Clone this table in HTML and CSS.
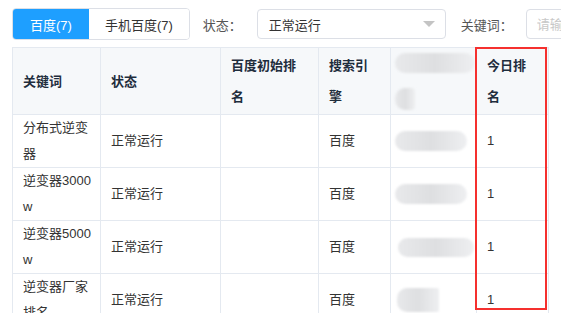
FILE: index.html
```html
<!DOCTYPE html>
<html lang="zh-CN">

<head>
    <meta charset="UTF-8">
    <meta name="viewport" content="width=device-width, initial-scale=1.0">
    <title>关键词排名</title>
    <link rel="stylesheet" href="styles.css">
</head>

<body>
    <div class="toolbar">
        <div class="tabs">
            <button class="tab active">百度(7)</button>
            <button class="tab">手机百度(7)</button>
        </div>
        <span class="label">状态：</span>
        <div class="select">
            <span>正常运行</span>
            <i class="arrow"></i>
        </div>
        <span class="label">关键词：</span>
        <input class="keyword" type="text" placeholder="请输入关键词">
    </div>

    <div class="table-wrap">
        <table class="rank-table">
            <colgroup>
                <col style="width: 88px">
                <col style="width: 120px">
                <col style="width: 98px">
                <col style="width: 72px">
                <col style="width: 86px">
                <col style="width: 72px">
            </colgroup>
            <thead>
                <tr>
                    <th>关键词</th>
                    <th>状态</th>
                    <th>百度初始排名</th>
                    <th>搜索引擎</th>
                    <th class="site">
                        <div class="blur line"></div>
                        <div class="blur dot"></div>
                    </th>
                    <th>今日排名</th>
                </tr>
            </thead>
            <tbody>
                <tr>
                    <td>分布式逆变器</td>
                    <td>正常运行</td>
                    <td></td>
                    <td>百度</td>
                    <td class="site"><div class="blur row-a"></div></td>
                    <td>1</td>
                </tr>
                <tr>
                    <td>逆变器3000w</td>
                    <td>正常运行</td>
                    <td></td>
                    <td>百度</td>
                    <td class="site"><div class="blur row-a"></div></td>
                    <td>1</td>
                </tr>
                <tr>
                    <td>逆变器5000w</td>
                    <td>正常运行</td>
                    <td></td>
                    <td>百度</td>
                    <td class="site"><div class="blur row-b"></div></td>
                    <td>1</td>
                </tr>
                <tr>
                    <td>逆变器厂家排名</td>
                    <td>正常运行</td>
                    <td></td>
                    <td>百度</td>
                    <td class="site"><div class="blur row-c"></div></td>
                    <td>1</td>
                </tr>
            </tbody>
        </table>
        <!-- 标注今日排名这一列 -->
        <div class="mark"></div>
    </div>
</body>

</html>
```

FILE: styles.css
```css
body {
    font-family: "Liberation Sans", "Noto Sans CJK SC", sans-serif;
    font-size: 13px;
    color: #333;
    background-color: #fff;
    margin: 0;
    padding: 8px 0 0 12px;
    overflow: hidden;
}

.toolbar {
    display: flex;
    align-items: center;
    white-space: nowrap;
    height: 32px;
}

.tabs {
    display: flex;
    flex-shrink: 0;
    border: 1px solid #dcdfe6;
    border-radius: 4px;
    overflow: hidden;
}

.tab {
    font-family: inherit;
    font-size: 13px;
    height: 30px;
    padding: 0 16px;
    background-color: #fff;
    color: #333;
    border: none;
    cursor: pointer;
    outline: none;
}

.tab.active {
    background-color: #1e9fff;
    color: #fff;
    padding: 0 17px;
}

.label {
    flex-shrink: 0;
    margin-left: 13px;
    color: #555;
}

.select {
    flex-shrink: 0;
    display: flex;
    align-items: center;
    justify-content: space-between;
    box-sizing: border-box;
    width: 189px;
    height: 30px;
    margin-left: 15px;
    padding: 0 10px 0 11px;
    border: 1px solid #dcdfe6;
    border-radius: 4px;
    color: #333;
}

.arrow {
    width: 0;
    height: 0;
    border-left: 6px solid transparent;
    border-right: 6px solid transparent;
    border-top: 6px solid #c4c4c4;
}

.select + .label {
    margin-left: 15px;
}

.keyword {
    flex-shrink: 0;
    box-sizing: border-box;
    width: 160px;
    height: 30px;
    margin-left: 13px;
    padding: 0 10px;
    font-family: inherit;
    font-size: 13px;
    border: 1px solid #dcdfe6;
    border-radius: 4px;
    outline: none;
}

.keyword::placeholder {
    color: #c8c8c8;
}

.table-wrap {
    position: relative;
    width: 537px;
    height: 266px;
    margin-top: 7px;
    overflow: hidden;
}

.rank-table {
    table-layout: fixed;
    width: 537px;
    border-collapse: collapse;
    border: 1px solid #e4e9f0;
}

.rank-table th,
.rank-table td {
    border: 1px solid #e4e9f0;
    text-align: left;
    vertical-align: middle;
    word-break: break-all;
}

.rank-table th {
    background-color: #f6f8fa;
    color: #1f2d3d;
    font-weight: bold;
    line-height: 31px;
    padding: 2px 12px 2px 10px;
}

.rank-table td {
    line-height: 26px;
    height: 52px;
    padding: 0 8px 0 10px;
}

.rank-table .site {
    padding: 0 0 0 4px;
}

/* 站点一栏打了码 */
.blur {
    background: linear-gradient(90deg, #e8e9eb, #dedfe1 50%, #eeeff1);
    border-radius: 10px;
    filter: blur(1px);
}

.blur.line {
    width: 80px;
    height: 20px;
    margin-bottom: 15px;
}

.blur.dot {
    width: 20px;
    height: 22px;
    border-radius: 10px 4px 4px 10px;
}

.blur.row-a {
    width: 72px;
    height: 20px;
}

.blur.row-b {
    width: 76px;
    height: 19px;
    margin-left: 3px;
}

.blur.row-c {
    width: 42px;
    height: 24px;
    margin-left: 2px;
    border-radius: 10px 2px 2px 10px;
}

.mark {
    position: absolute;
    left: 463px;
    top: 0;
    width: 72px;
    height: 263px;
    box-sizing: border-box;
    border: 2px solid #f5302e;
}
```
